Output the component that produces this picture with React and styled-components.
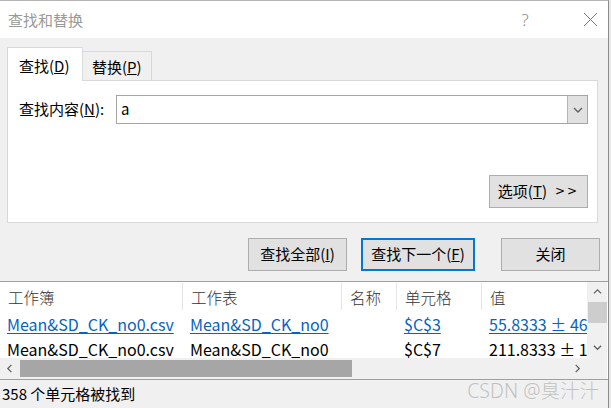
import styled, { createGlobalStyle } from 'styled-components';

const Global = createGlobalStyle`
	html, body {
		margin: 0;
		background: #e9e9e9;
	}
	body {
		font-family: "Noto Sans CJK SC", "Noto Sans", sans-serif;
		font-size: 15px;
		color: #000;
	}
`;

const Dialog = styled.div`
	width: 609px;
	height: 408px;
	box-sizing: border-box;
	border-top: 1px solid #b4b4b4;
	border-right: 1px solid #8a8a8a;
	background: #f0f0f0;
	display: flex;
	flex-direction: column;
	position: relative;
	overflow: hidden;
`;

const TitleBar = styled.div`
	height: 37px;
	background: #fff;
	display: flex;
	align-items: center;
	padding-left: 8px;
	color: #999;
	font-size: 15px;
`;

const Title = styled.span`
	flex: 1;
`;

const TitleIcon = styled.span`
	width: ${p => p.w}px;
	display: flex;
	justify-content: center;
	color: #8c8c8c;
	font-size: 17px;
	font-family: "Noto Sans", sans-serif;
	font-weight: 300;
`;

const Body = styled.div`
	padding: 9px 0 0 7px;
	display: flex;
	flex-direction: column;
`;

const Tabs = styled.div`
	display: flex;
	align-items: flex-end;
	height: 34px;
	position: relative;
	z-index: 1;
	margin-bottom: -1px;
`;

const Tab = styled.div`
	box-sizing: border-box;
	height: ${p => (p.active ? 34 : 30)}px;
	width: ${p => p.w}px;
	border: 1px solid #d9d9d9;
	border-bottom: ${p => (p.active ? 'none' : '1px solid #d9d9d9')};
	border-left: ${p => (p.first ? '1px solid #d9d9d9' : 'none')};
	background: ${p => (p.active ? '#fff' : '#f0f0f0')};
	display: flex;
	align-items: center;
	padding-left: ${p => p.pl}px;
	padding-top: ${p => (p.active ? 2 : 0)}px;
`;

const Panel = styled.div`
	box-sizing: border-box;
	width: 591px;
	height: 143px;
	background: #fff;
	border: 1px solid #d9d9d9;
	padding: 14px 9px 14px 11px;
	display: flex;
	flex-direction: column;
`;

const FieldRow = styled.div`
	display: flex;
	align-items: center;
`;

const Label = styled.label`
	width: 97px;
	padding-bottom: 2px;
`;

const Combo = styled.div`
	box-sizing: border-box;
	width: 472px;
	height: 29px;
	border: 1px solid #a5a5a5;
	display: flex;
	align-items: stretch;
`;

const ComboText = styled.div`
	flex: 1;
	padding-left: 4px;
	display: flex;
	align-items: center;
	padding-bottom: 3px;
`;

const ComboButton = styled.div`
	width: 19px;
	background: #e1e1e1;
	border-left: 1px solid #b4b4b4;
	display: flex;
	align-items: center;
	justify-content: center;
`;

const Button = styled.div`
	box-sizing: border-box;
	width: ${p => p.w}px;
	height: 33px;
	background: #e1e1e1;
	border: ${p => (p.focus ? '2px solid #0078d7' : '1px solid #adadad')};
	display: flex;
	align-items: center;
	justify-content: center;
	margin-left: ${p => p.ml || 0}px;
	padding-bottom: 2px;
`;

const OptionsButton = styled(Button)`
	margin-top: auto;
	align-self: flex-end;
	gap: 8px;
`;

const Arrows = styled.span`
	font-family: "DejaVu Sans", sans-serif;
	font-size: 12px;
	letter-spacing: 2px;
`;

const ButtonRow = styled.div`
	display: flex;
	justify-content: flex-end;
	padding: 15px 8px 10px 0;
`;

const Results = styled.div`
	border-top: 1px solid #a0a0a0;
	display: grid;
	grid-template-columns: 587px 20px;
	grid-template-rows: 76px 21px;
	background: #fff;
`;

const Table = styled.div`
	overflow: clip;
	display: grid;
	grid-template-columns: 182px 159px 55px 85px 106px;
	grid-auto-rows: 25px;
	grid-template-rows: 30px;
`;

const HeadCell = styled.div`
	display: flex;
	align-items: center;
	padding-left: 8px;
	border-left: ${p => (p.first ? 'none' : '1px solid #e5e5e5')};
	margin-top: 1px;
	margin-bottom: 2px;
	color: #333;
	font-size: 15.5px;
	font-weight: 300;
`;

const Cell = styled.div`
	padding: 3px 0 0 ${p => (p.first ? 7 : 8)}px;
	white-space: nowrap;
	overflow-x: clip;
	overflow-y: visible;
	font-size: 16px;
	line-height: 18px;
	color: ${p => (p.link ? '#0563c1' : '#000')};
	text-decoration: ${p => (p.link ? 'underline' : 'none')};
	text-underline-offset: 2px;
`;

const VScroll = styled.div`
	grid-row: 1;
	grid-column: 2;
	background: #f0f0f0;
	display: flex;
	flex-direction: column;
	align-items: center;
`;

const ScrollArrow = styled.div`
	height: ${p => p.h}px;
	width: ${p => (p.w ? `${p.w}px` : '100%')};
	display: flex;
	align-items: ${p => (p.end ? 'flex-end' : 'center')};
	padding-bottom: ${p => (p.end ? 6 : 0)}px;
	box-sizing: border-box;
	justify-content: center;
`;

const VThumb = styled.div`
	width: 19px;
	height: 21px;
	background: #cdcdcd;
`;

const HScroll = styled.div`
	grid-row: 2;
	grid-column: 1;
	background: #f0f0f0;
	display: flex;
	align-items: center;
`;

const HThumb = styled.div`
	width: 332px;
	height: 17px;
	background: #a6a6a6;
`;

const Spacer = styled.span`
	flex: 1;
`;

const Corner = styled.div`
	grid-row: 2;
	grid-column: 2;
	background: #f0f0f0;
`;

const StatusBar = styled.div`
	flex: 1;
	border-top: 1px solid #a0a0a0;
	display: flex;
	align-items: center;
	padding-left: 2px;
	padding-bottom: 1px;
	position: relative;
`;

const Watermark = styled.div`
	position: absolute;
	right: 9px;
	top: -5px;
	color: rgba(150, 150, 150, 0.55);
	font-size: 19.5px;
	font-family: "Noto Sans", "Noto Sans CJK SC", sans-serif;
	font-weight: 300;
`;

const Chevron = ({ dir, size = 9, color = '#606060' }) => {
	const paths = {
		up: 'M1 6 L5 2 L9 6',
		down: 'M1 3 L5 7 L9 3',
		left: 'M6 1 L2 5 L6 9',
		right: 'M3 1 L7 5 L3 9',
	};
	return (
		<svg width={size} height={size} viewBox="0 0 10 10">
			<path d={paths[dir]} fill="none" stroke={color} strokeWidth="1.4" />
		</svg>
	);
};

const Close = () => (
	<svg width="15" height="15" viewBox="0 0 15 15">
		<path d="M1 1 L14 14 M14 1 L1 14" stroke="#777" strokeWidth="1" fill="none" />
	</svg>
);

const rows = [
	{ link: true, book: 'Mean&SD_CK_no0.csv', sheet: 'Mean&SD_CK_no0', name: '', cell: '$C$3', value: '55.8333 ± 46.5000' },
	{ link: false, book: 'Mean&SD_CK_no0.csv', sheet: 'Mean&SD_CK_no0', name: '', cell: '$C$7', value: '211.8333 ± 112.0000' },
];

const App = () => {
	return (
		<>
			<Global />
			<Dialog>
				<TitleBar>
					<Title>查找和替换</Title>
					<TitleIcon w={20}>?</TitleIcon>
					<TitleIcon w={37} />
					<TitleIcon w={36}><Close /></TitleIcon>
				</TitleBar>
				<Body>
					<Tabs>
						<Tab active first w={76} pl={11}>查找(<u>D</u>)</Tab>
						<Tab w={69} pl={9}>替换(<u>P</u>)</Tab>
					</Tabs>
					<Panel>
						<FieldRow>
							<Label>查找内容(<u>N</u>):</Label>
							<Combo>
								<ComboText>a</ComboText>
								<ComboButton><Chevron dir="down" size={10} /></ComboButton>
							</Combo>
						</FieldRow>
						<OptionsButton w={99}>
							<span>选项(<u>T</u>)</span>
							<Arrows>&gt;&gt;</Arrows>
						</OptionsButton>
					</Panel>
					<ButtonRow>
						<Button w={99}>查找全部(<u>I</u>)</Button>
						<Button w={114} ml={14} focus>查找下一个(<u>F</u>)</Button>
						<Button w={99} ml={26}>关闭</Button>
					</ButtonRow>
				</Body>
				<Results>
					<Table>
						<HeadCell first>工作簿</HeadCell>
						<HeadCell>工作表</HeadCell>
						<HeadCell>名称</HeadCell>
						<HeadCell>单元格</HeadCell>
						<HeadCell>值</HeadCell>
						{rows.map((r, i) => [
							<Cell key={'a' + i} first link={r.link}>{r.book}</Cell>,
							<Cell key={'b' + i} link={r.link}>{r.sheet}</Cell>,
							<Cell key={'c' + i}>{r.name}</Cell>,
							<Cell key={'d' + i} link={r.link}>{r.cell}</Cell>,
							<Cell key={'e' + i} link={r.link}>{r.value}</Cell>,
						])}
					</Table>
					<VScroll>
						<ScrollArrow h={20}><Chevron dir="up" /></ScrollArrow>
						<VThumb />
						<ScrollArrow h={35} end><Chevron dir="down" /></ScrollArrow>
					</VScroll>
					<HScroll>
						<ScrollArrow h={21} w={20}><Chevron dir="left" /></ScrollArrow>
						<HThumb />
						<Spacer />
						<ScrollArrow h={21} w={20}><Chevron dir="right" /></ScrollArrow>
					</HScroll>
					<Corner />
				</Results>
				<StatusBar>
					358 个单元格被找到
					<Watermark>CSDN @臭汁汁</Watermark>
				</StatusBar>
			</Dialog>
		</>
	);
};

export default App;
